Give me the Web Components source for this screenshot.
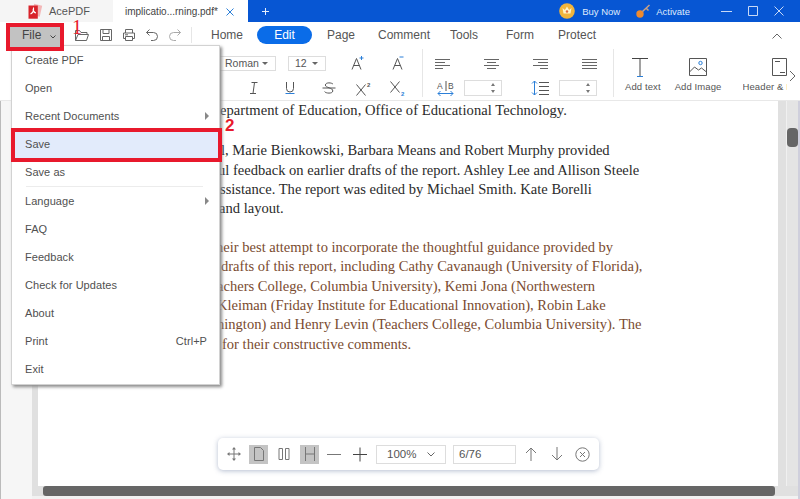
<!DOCTYPE html>
<html><head><meta charset="utf-8"><title>AcePDF</title>
<style>
html,body{margin:0;padding:0;background:#fff;overflow:hidden}
body{font-family:"Liberation Sans",Arial,sans-serif}
</style></head><body>
<pdf-app>
  <title-bar slot="title"></title-bar>
  <main-tabs slot="tabs"></main-tabs>
  <edit-ribbon slot="ribbon"></edit-ribbon>
  <doc-view slot="doc">
    <doc-para>
      <doc-line x="1" style="letter-spacing:.05px">epartment of Education, Office of Educational Technology.</doc-line>
    </doc-para>
    <doc-para>
      <doc-line x="2">l, Marie Bienkowski, Barbara Means and Robert Murphy provided</doc-line>
      <doc-line x="-1">ul feedback on earlier drafts of the report. Ashley Lee and Allison Steele</doc-line>
      <doc-line x="1">ssistance. The report was edited by Michael Smith. Kate Borelli</doc-line>
      <doc-line>and layout.</doc-line>
    </doc-para>
    <doc-para tone="brown">
      <doc-line x="-3">heir best attempt to incorporate the thoughtful guidance provided by</doc-line>
      <doc-line x="2">drafts of this report, including Cathy Cavanaugh (University of Florida),</doc-line>
      <doc-line x="-2">achers College, Columbia University), Kemi Jona (Northwestern</doc-line>
      <doc-line x="-2">Kleiman (Friday Institute for Educational Innovation), Robin Lake</doc-line>
      <doc-line x="-2">hington) and Henry Levin (Teachers College, Columbia University). The</doc-line>
      <doc-line x="3">for their constructive comments.</doc-line>
    </doc-para>
  </doc-view>
  <file-menu slot="overlay"></file-menu>
  <zoom-bar slot="overlay"></zoom-bar>
  <step-marks slot="overlay"></step-marks>
</pdf-app>
<script>
const S='fill="none" stroke="currentColor" stroke-width="1"';
const ICONS={
 open:[16,14,`<path ${S} d="M1.5 12.5V2.5h4l1.5 2h6v2M1.5 12.5h11l2-6H4l-2.5 6z"/>`],
 save:[14,14,`<path ${S} d="M1.5 1.5h11v11h-11zM4 1.5v4h6v-4M3.5 12.5v-4h7v4"/>`],
 print:[14,14,`<path ${S} d="M3.5 5V1.5h7V5M3.5 10.5h-2V5h11v5.5h-2M3.5 8.5h7v4h-7z"/><path fill="currentColor" d="M3 6.3h3v1H3z"/>`],
 undo:[14,14,`<path ${S} d="M4.5 1.5L1.5 4.5l3 3M1.5 4.5h7a4 4 0 0 1 0 8H6"/>`],
 redo:[14,14,`<path ${S} d="M9.5 1.5l3 3-3 3M12.5 4.5h-7a4 4 0 0 0 0 8H8"/>`],
 aplus:[18,16,`<path ${S} d="M2 14.5L6.5 3.5l4.5 11M3.7 10.5h5.6"/><path stroke="#2b7fd8" stroke-width="1" d="M9.5 3h4M11.5 1v4"/>`],
 aminus:[18,16,`<path ${S} d="M2 14.5L6.5 3.5l4.5 11M3.7 10.5h5.6"/><path stroke="#2b7fd8" stroke-width="1" d="M8.5 2h4"/>`],
 italic:[12,14,`<path ${S} d="M3.5 1.5h6M2 12.5h6M6.5 1.5l-1.5 11"/>`],
 under:[12,14,`<path ${S} d="M2.5 1v6.5a3.5 3.5 0 0 0 7 0V1"/><path stroke="#2b7fd8" d="M1.5 12.5h9"/>`],
 strike:[14,14,`<path ${S} d="M11 3.2C10 1.6 3.6 1 3.4 4c-.2 3 7.6 2.5 7.4 6-.2 3-7.2 2.4-8.2.6M.5 7h13"/>`],
 sup:[18,15,`<path ${S} d="M1.5 3.5l9 11M10.5 3.5l-9 11"/><text x="12" y="6" font-size="6" font-weight="700" font-family="Liberation Sans" fill="#555">2</text>`],
 sub:[18,17,`<path ${S} d="M1.5 1.5l9 11M10.5 1.5l-9 11"/><text x="12" y="16" font-size="6" font-weight="700" font-family="Liberation Sans" fill="#2b7fd8">2</text>`],
 left:[16,11,`<path stroke="currentColor" d="M0 1.5h15M0 4.5h10M0 7.5h15M0 10.5h8"/>`],
 center:[16,11,`<path stroke="currentColor" d="M0 1.5h15M3 4.5h9M0 7.5h15M3 10.5h9"/>`],
 right:[16,11,`<path stroke="currentColor" d="M0 1.5h15M5 4.5h10M0 7.5h15M7 10.5h8"/>`],
 just:[16,11,`<path stroke="currentColor" d="M0 1.5h15M0 4.5h15M0 7.5h15M0 10.5h15"/>`],
 ab:[18,15,`<text x="0" y="8" font-size="8.5" font-family="Liberation Sans" fill="#555">A</text><text x="11" y="8" font-size="8.5" font-family="Liberation Sans" fill="#555">B</text><path stroke="#555" d="M9 0v10"/><path fill="none" stroke="#2b7fd8" d="M1 12.5h15M3.5 10l-2.5 2.5 2.5 2.5M13.5 10l2.5 2.5-2.5 2.5"/>`],
 lines:[18,16,`<path fill="none" stroke="#2b7fd8" d="M3.5 1v14M1 3.5L3.5 1 6 3.5M1 12.5L3.5 15 6 12.5"/><path stroke="#555" d="M8 2.5h10M8 6.5h10M8 10.5h10M8 14.5h10"/>`],
 bigT:[24,20,`<path fill="none" stroke="#444" d="M1 1.5h16M9 1.5V19"/><path stroke="#2b7fd8" d="M6 19.5h6"/>`],
 bigImg:[20,20,`<path fill="none" stroke="#555" d="M1.5 1.5h17v17h-17zM1.5 15l5-5 4 3 3-2 5 4"/><circle cx="12.5" cy="6" r="1.7" fill="none" stroke="#2b7fd8"/>`],
 bigHead:[17,20,`<path fill="none" stroke="#555" d="M1.5 1.5h14v17h-14zM4 4.5h5M9 15.5h5"/>`],
 move:[14,14,`<path ${S} d="M7 1v12M1 7h12"/><path fill="currentColor" d="M7 0l2 2.5H5zM7 14l2-2.5H5zM0 7l2.5-2v4zM14 7l-2.5-2v4z"/>`],
 page:[12,14,`<path ${S} d="M1.5 .5h6l3 3v10h-9z"/>`],
 twin:[12,14,`<path ${S} d="M1 1.5h3.5v11H1zM7.5 1.5H11v11H7.5z"/>`],
 fit:[12,14,`<path ${S} d="M1.5 0v14M10.5 0v14M1.5 7h9"/>`],
 minus:[14,14,`<path stroke="currentColor" d="M0 7.5h14"/>`],
 plus:[14,14,`<path stroke="currentColor" d="M0 7.5h14M7 .5v14"/>`],
 up:[12,14,`<path ${S} d="M6 14V1M1 6l5-5 5 5"/>`],
 down:[12,14,`<path ${S} d="M6 0v13M1 8l5 5 5-5"/>`],
 closeC:[15,15,`<circle cx="7.5" cy="7.5" r="6.7" ${S}/><path ${S} d="M5 5l5 5M10 5l-5 5"/>`],
 chevD:[8,5,`<path ${S} d="M.5 .5L4 4 7.5 .5"/>`],
 chevS:[6,4,`<path ${S} d="M.5 .5L3 3 5.5 .5"/>`],
 chevU:[10,6,`<path ${S} d="M.5 5.5L5 1l4.5 4.5"/>`],
 chevR:[7,12,`<path ${S} d="M1 1l5 5-5 5"/>`],
 x:[8,8,`<path ${S} d="M.5 .5l7 7M7.5 .5l-7 7"/>`],
 xw:[10,10,`<path ${S} d="M.5 .5l9 9M9.5 .5l-9 9"/>`],
 addT:[7,7,`<path stroke="currentColor" d="M0 3.5h7M3.5 0v7"/>`],
 min:[11,11,`<path stroke="currentColor" d="M0 5.5h11"/>`],
 max:[10,10,`<path ${S} d="M.5 .5h9v9h-9z"/>`],
 crown:[16,16,`<circle cx="8" cy="8" r="7.8" fill="#f2b53c"/><path fill="#fff3c8" d="M3.5 5l2.4 2L8 3.5 10.1 7l2.4-2-1 5.5h-7z"/><circle cx="8" cy="8.5" r="1.2" fill="#e2683a"/>`],
 key:[14,14,`<circle cx="4" cy="10" r="3.7" fill="#ef8a2e"/><path stroke="#c9a184" stroke-width="1.5" d="M6.5 7.5L13.5 1M10.5 4.5l2 2"/>`],
 logo:[15,16,`<path fill="#f3b7b7" d="M6 .8l8.2 2-2.5 11-5-1.2z"/><path fill="#d8232a" d="M.5 2.5h9.300v13.200H.5z"/><path fill="none" stroke="#fff" stroke-width="1.2" d="M2.5 11c2-1 3.200-3.500 3-5.500-1 1.500.5 4 2.500 4.500"/>`]
};
function def(name,css,html,extra){
  customElements.define(name,class extends HTMLElement{
    constructor(){super();this.attachShadow({mode:'open'}).innerHTML=`<style>${css}</style>${html}`;}
    connectedCallback(){extra&&extra(this);}
  });
}
customElements.define('ui-icon',class extends HTMLElement{
  constructor(){super();this.attachShadow({mode:'open'});}
  connectedCallback(){const i=ICONS[this.getAttribute('name')];
    this.shadowRoot.innerHTML=`<style>:host{display:inline-flex;align-items:center;justify-content:center;color:inherit;flex:none}svg{display:block;overflow:visible}</style><svg width="${i[0]}" height="${i[1]}" viewBox="0 0 ${i[0]} ${i[1]}">${i[2]}</svg>`;}
});
def('pdf-app',`:host{display:flex;flex-direction:column;width:800px;height:499px;position:relative;overflow:hidden;font:12px "Liberation Sans",Arial,sans-serif;color:#444}
`,`<slot name="title"></slot><slot name="tabs"></slot><slot name="ribbon"></slot><slot name="doc"></slot><slot name="overlay"></slot>`);
def('title-bar',`:host{display:flex;height:22px;flex:none;background:#0756d3;color:#e6eefc}
.brand{width:113px;background:#f5f5f5;display:flex;align-items:center;padding-left:28px;box-sizing:border-box;gap:6px;color:#555;font-size:11px}
.tab{width:135px;background:#fff;display:flex;align-items:center;padding-left:12px;box-sizing:border-box;color:#444;font-size:10px}
.tab ui-icon{color:#2b7fd8;margin-left:8px;margin-top:1px}
.add{margin-left:14px;align-self:center;display:flex}
.sp{flex:1}
.act{display:flex;align-items:center;font-size:9.5px;color:#dfe9fb}
.act.a{gap:7px;margin-right:16px}.act.b{gap:6px;margin-right:31px}
.win{display:flex;align-items:center;gap:16px;margin-right:16px}
.win ui-icon{color:#c8d9f6}
`,`<div class="brand"><ui-icon name="logo"></ui-icon>AcePDF</div>
<div class="tab">implicatio...rning.pdf*<ui-icon name="x"></ui-icon></div>
<div class="add"><ui-icon name="addT"></ui-icon></div><div class="sp"></div>
<div class="act a"><ui-icon name="crown"></ui-icon>Buy Now</div>
<div class="act b"><ui-icon name="key"></ui-icon>Activate</div>
<div class="win"><ui-icon name="min"></ui-icon><ui-icon name="max"></ui-icon><ui-icon name="xw"></ui-icon></div>`);
def('main-tabs',`:host{display:flex;height:24px;flex:none;background:#fff;align-items:center;color:#555;position:relative;box-sizing:border-box;padding-top:2px}
.tools{display:flex;align-items:center;margin-left:75px;gap:9px;width:117px;height:16px;border-right:1px solid #e6e6e6;box-sizing:border-box;flex:none;color:#666}
.t{width:14px;display:flex;justify-content:center;flex:none}
.t.off{color:#aaa}
.nav{display:flex;align-items:center;font-size:12px}
.nav span{display:block;text-align:center;flex:none;box-sizing:border-box}
.edit{background:#0a6ce8;color:#fff;border-radius:9px;height:18px;line-height:18px;width:55px}
.up{position:absolute;left:772px;top:11px;color:#666}
`,`<div class="tools"><div class="t" style="margin-right:1px"><ui-icon name="open"></ui-icon></div><div class="t"><ui-icon name="save"></ui-icon></div><div class="t"><ui-icon name="print"></ui-icon></div><div class="t"><ui-icon name="undo"></ui-icon></div><div class="t off"><ui-icon name="redo"></ui-icon></div></div>
<div class="nav"><span style="width:65px;padding-left:5px">Home</span><span class="edit">Edit</span><span style="width:58px">Page</span><span style="width:68px">Comment</span><span style="width:52px">Tools</span><span style="width:60px">Form</span><span style="width:54px">Protect</span></div>
<ui-icon class="up" name="chevU"></ui-icon>`);
def('edit-ribbon',`:host{display:flex;height:55px;flex:none;background:#fff;border-bottom:1px solid #e8e8e8;box-sizing:border-box;color:#555;overflow:hidden;position:relative}
.g{display:flex;flex-direction:column;flex:none;box-sizing:border-box;gap:9px}
.g1{width:223px;margin-left:200px;border-right:1px solid #e6e6e6;margin-top:3px;margin-bottom:3px;padding-top:6px}
.g2{width:191px;border-right:1px solid #e6e6e6;margin-top:3px;margin-bottom:3px;padding-top:6px}
.r{display:flex;align-items:center;height:16px}
.sel{height:15px;border:1px solid #ddd;box-sizing:border-box;display:flex;align-items:center;font-size:10.5px;position:relative;color:#555}
.sel b{position:absolute;right:7px;top:5px;width:0;height:0;border:3px solid transparent;border-top:3px solid #666;border-bottom:0}
.num{height:16px;border:1px solid #ddd;box-sizing:border-box;width:38px;position:relative}
.num:before,.num:after{content:"";position:absolute;right:6px;width:0;height:0;border:2px solid transparent}
.num:before{top:2px;border-bottom:3px solid #777;border-top:0}
.num:after{bottom:2px;border-top:3px solid #777;border-bottom:0}
.big{display:flex;flex:none;padding-left:11px;gap:14px;margin-top:9px}
.b{display:flex;flex-direction:column;align-items:center;font-size:9.5px;letter-spacing:.1px;white-space:nowrap;color:#555}
.b ui-icon{height:24px;margin-bottom:2px}
.hd{width:44px;overflow:hidden;align-items:flex-start;margin-left:7px}
.hd ui-icon{margin-left:28px}
.more{position:absolute;left:789px;top:24px;color:#666}
`,`<div class="g g1">
<div class="r"><div class="sel" style="width:76px;padding-left:24px">Roman<b></b></div><div class="sel" style="width:38px;margin-left:12px;padding-left:6px">12<b></b></div><ui-icon name="aplus" style="margin-left:24px"></ui-icon><ui-icon name="aminus" style="margin-left:23px"></ui-icon></div>
<div class="r"><ui-icon name="italic" style="margin-left:48px"></ui-icon><ui-icon name="under" style="margin-left:24px"></ui-icon><ui-icon name="strike" style="margin-left:26px"></ui-icon><ui-icon name="sup" style="margin-left:19px"></ui-icon><ui-icon name="sub" style="margin-left:16px"></ui-icon></div>
</div>
<div class="g g2">
<div class="r" style="color:#666"><ui-icon name="left" style="margin-left:12px"></ui-icon><ui-icon name="center" style="margin-left:33px"></ui-icon><ui-icon name="right" style="margin-left:33px"></ui-icon><ui-icon name="just" style="margin-left:33px"></ui-icon></div>
<div class="r"><ui-icon name="ab" style="margin-left:14px"></ui-icon><div class="num" style="margin-left:9px"></div><ui-icon name="lines" style="margin-left:29px"></ui-icon><div class="num" style="margin-left:10px"></div></div>
</div>
<div class="big"><div class="b"><ui-icon name="bigT"></ui-icon>Add text</div><div class="b"><ui-icon name="bigImg"></ui-icon>Add Image</div><div class="b hd"><ui-icon name="bigHead"></ui-icon>Header &amp; F</div></div>
<ui-icon class="more" name="chevR"></ui-icon>`);
def('doc-view',`:host{display:flex;flex:1;min-height:0;background:#f6f6f6;border-left:1px solid #bbb;position:relative}
.gut{width:31px;flex:none}
.col{flex:1;display:flex;flex-direction:column;min-width:0}
.area{flex:1;display:flex;min-height:0}
.band{width:6px;background:#e0e0e0;flex:none}
.page{width:740px;background:#fff;flex:none;padding:0 0 0 181px;box-sizing:border-box;overflow:hidden}
.rb{width:8px;background:#e0e0e0;flex:none;border-right:1px solid #f0f0f0}
.hs{height:10px;background:#e0e0e0;display:flex;padding-left:11px}
.hs i{display:block;width:732px;height:10px;background:#666;border-radius:3px}
.vs{width:11px;background:#e4e4e4;flex:none;position:relative}
.vs i{position:absolute;left:0;top:27px;width:11px;height:19px;background:#666;border-radius:4px}
.end{width:2px;background:#cfcfdc;flex:none}
.foot{height:3px;background:#f2f2f2}
`,`<div class="gut"></div><div class="col"><div class="area"><div class="band"></div><div class="page"><slot></slot></div><div class="rb"></div><div class="vs"><i></i></div></div><div class="hs"><i></i></div><div class="foot"></div></div><div class="end"></div>`);
def('doc-para',`:host{display:block;margin-bottom:19.3px;font:14.56px/19.35px "Liberation Serif","Times New Roman",serif;color:#2a2a2a}
:host([tone=brown]){color:#7a4b30}
:host(:first-child){margin-bottom:21px}`,`<slot></slot>`);
def('doc-line',`:host{display:block;white-space:pre}`,`<slot></slot>`,el=>{const x=el.getAttribute('x');if(x)el.style.marginLeft=x+'px';});
def('file-menu',`:host{position:absolute;left:11px;top:45px;width:209px;background:#fff;border:1px solid #d2d2d2;box-sizing:border-box;box-shadow:2px 2px 3px #8a8a8a;display:flex;flex-direction:column;padding-bottom:1px;color:#505050;font-size:11px;letter-spacing:.05px}
.i{height:28px;display:flex;align-items:center;padding:0 10px 0 13px;box-sizing:border-box;flex:none;justify-content:space-between}
.i.on{background:#e2ebfb}
.sep{height:1px;background:#ececec;margin:0 16px 0 14px}
.arr{width:0;height:0;border:4px solid transparent;border-left:4px solid #888;border-right:0}
.k{margin-right:2px}
`,`<div class="i">Create PDF</div><div class="i">Open</div><div class="i">Recent Documents<span class="arr"></span></div><div class="i on">Save</div><div class="i">Save as</div><div class="sep"></div><div class="i">Language<span class="arr"></span></div><div class="i">FAQ</div><div class="i">Feedback</div><div class="i">Check for Updates</div><div class="i">About</div><div class="i">Print<span class="k">Ctrl+P</span></div><div class="i">Exit</div>`);
def('zoom-bar',`:host{position:absolute;left:218px;top:438px;width:381px;height:32px;background:#fff;border-radius:5px;box-shadow:0 1px 5px rgba(90,110,150,.45);display:flex;align-items:center;color:#666;box-sizing:border-box;padding-left:8px}
.c{height:19px;display:flex;align-items:center;justify-content:center;flex:none;color:#777}
.on{background:#c4c4c4}
.box{height:19px;border:1px solid #ddd;box-sizing:border-box;display:flex;align-items:center;font-size:11.5px;color:#555;flex:none;position:relative}
.box ui-icon{position:absolute;right:10px;top:6px;color:#666}
.dark{color:#444}
`,`<div class="c" style="width:15px"><ui-icon name="move"></ui-icon></div>
<div class="c on" style="width:19px;margin-left:8px"><ui-icon name="page"></ui-icon></div>
<div class="c" style="width:12px;margin-left:10px"><ui-icon name="twin"></ui-icon></div>
<div class="c on" style="width:19px;margin-left:10px"><ui-icon name="fit"></ui-icon></div>
<div class="c" style="width:14px;margin-left:8px"><ui-icon name="minus"></ui-icon></div>
<div class="c dark" style="width:14px;margin-left:12px"><ui-icon name="plus"></ui-icon></div>
<div class="box" style="width:70px;margin-left:9px;padding-left:10px">100%<ui-icon name="chevD"></ui-icon></div>
<div class="box" style="width:63px;margin-left:7px;padding-left:5px">6/76</div>
<div class="c" style="width:12px;margin-left:9px"><ui-icon name="up"></ui-icon></div>
<div class="c" style="width:12px;margin-left:14px"><ui-icon name="down"></ui-icon></div>
<div class="c" style="width:15px;margin-left:12px"><ui-icon name="closeC"></ui-icon></div>`);
def('step-marks',`:host{display:contents}
.file{position:absolute;left:6px;top:23px;width:58px;height:28px;border:4px solid #e8192c;box-sizing:border-box;background:#c2c2c2;display:flex;align-items:center;font:12px "Liberation Sans",sans-serif;color:#444;padding-left:12px;gap:9px;padding-bottom:4px}
.file ui-icon{margin-top:4px}
.save{position:absolute;left:11px;top:128px;width:211px;height:34px;border:4px solid #e8192c;box-sizing:border-box}
.n1{position:absolute;left:72px;top:17px;font:20px/20px "Liberation Serif",serif;color:#e8192c}
.n2{position:absolute;left:225px;top:116px;font:700 17px/20px "Liberation Sans",sans-serif;color:#e8192c}
`,`<div class="file">File<ui-icon name="chevS"></ui-icon></div><div class="save"></div><div class="n1">1</div><div class="n2">2</div>`);
</script>
</body></html>
